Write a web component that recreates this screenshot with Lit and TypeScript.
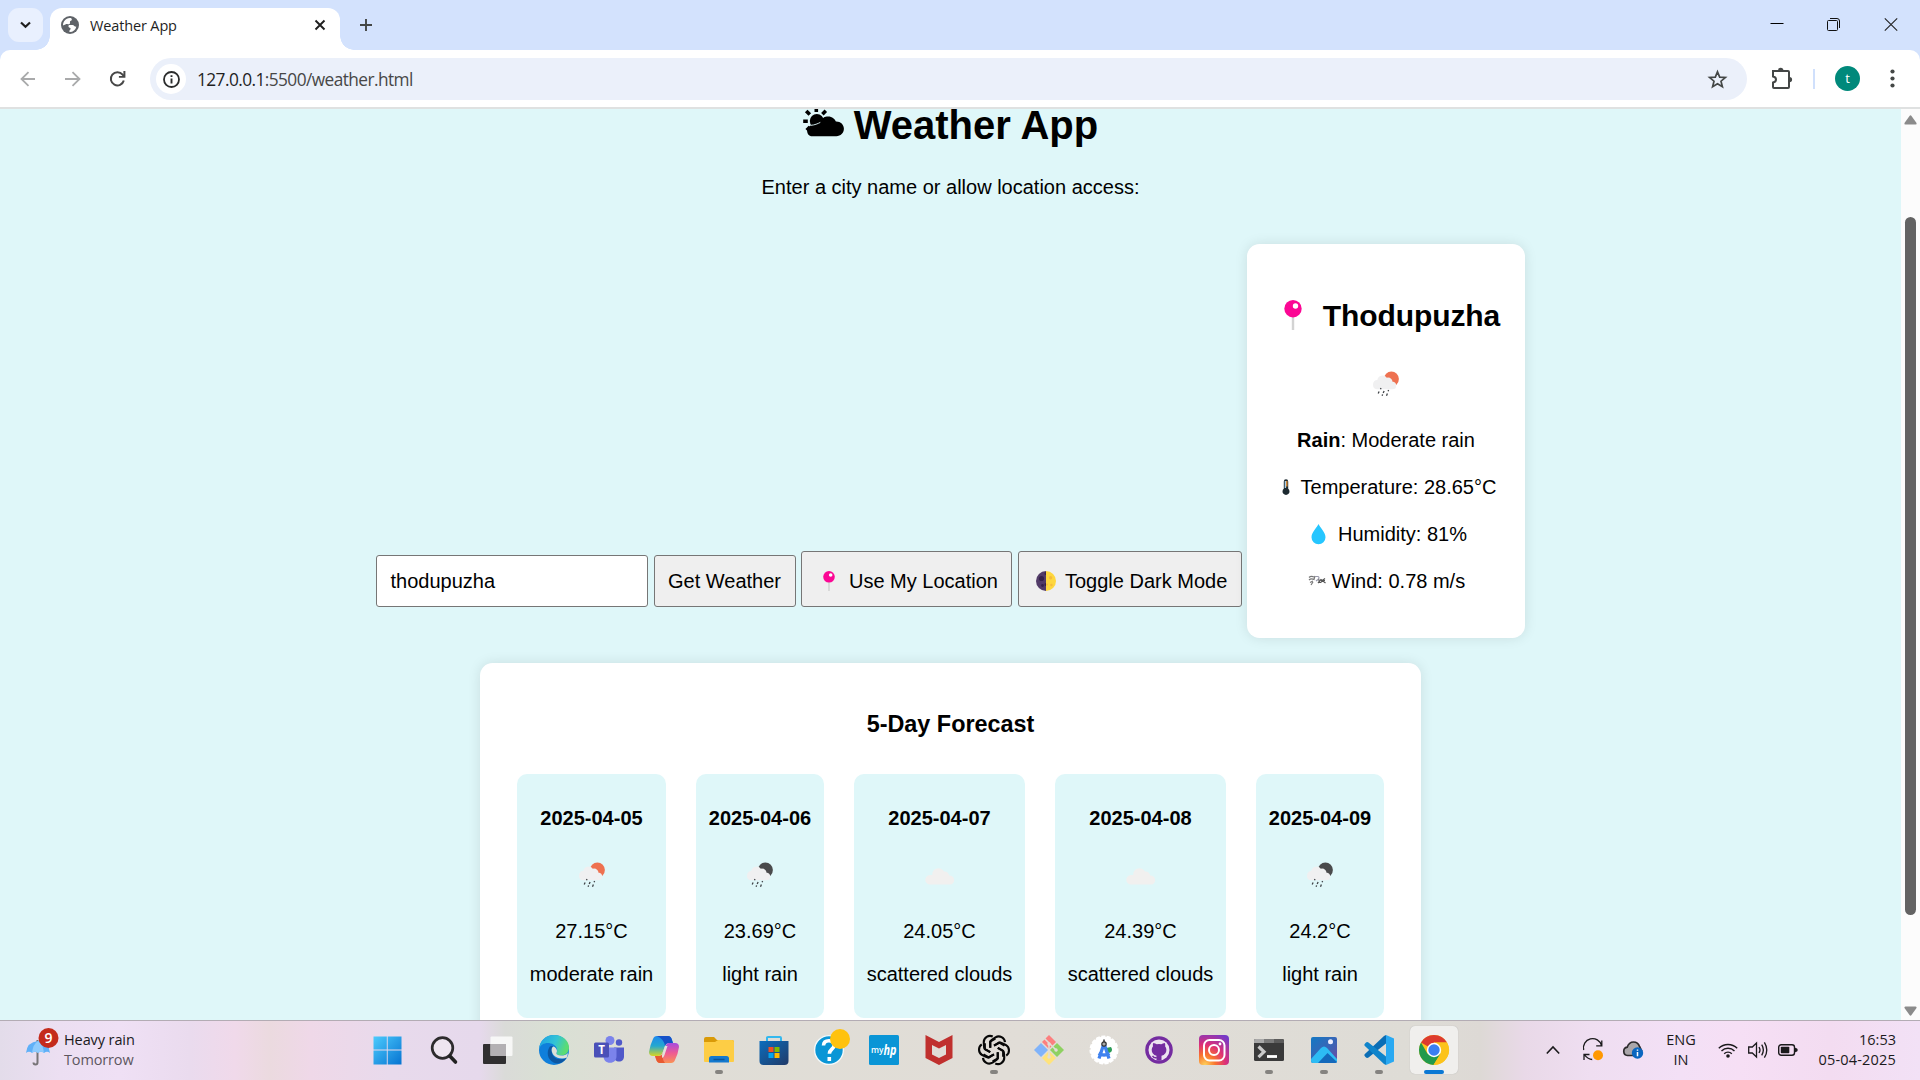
import { LitElement, html, css, svg } from "lit";
import { customElement } from "lit/decorators.js";

const rainIcon = (disc: string, size = 30) => html`<svg width=${size} height=${size} viewBox="0.8 -0.4 30 30">
  <circle cx="21.2" cy="9.6" r="7.5" fill=${disc}/>
  <path d="M6.5 19.8a4.6 4.6 0 0 1 .6-9.1A5.3 5.3 0 0 1 16.6 8.300a4.800 4.800 0 0 1 4.500 1.300q1.300 1.300 1 2.400a4.300 4.300 0 0 1 3.900 4.300 3.600 3.600 0 0 1-3.600 3.500z" fill="#f0f0f1"/>
  <path d="M10.800 18.700l-.5 1.200M8.900 22.200l-.9 2M13.900 21.600l-.9 2M18.400 20.700l-.5 1.200M12.400 25l-.5 1.400M17.200 24.200l-.9 2.200" stroke="#3f4347" stroke-width="1.300"/>
</svg>`;

const cloudIcon = html`<svg width="30" height="30" viewBox="0 0 30 30">
  <path d="M5.200 24.600a4.700 4.700 0 0 1-.4-9.500q1.900-.3 2.500-.2A6.200 6.200 0 0 1 18 10.200q1 1.300 1 1.300a4.500 4.500 0 0 1 5.200 4.100 4.500 4.500 0 0 1 .9 9z" fill="#f1f0ef"/>
</svg>`;

const pinIcon = (w: number, h: number) => html`<svg width=${w} height=${h} viewBox="0 0 18 30">
  <path d="M9 16v14" stroke="#d3d3d3" stroke-width="2.400"/>
  <circle cx="9" cy="8.700" r="8.700" fill="#fb0794"/><circle cx="11.500" cy="6" r="2.700" fill="#fff"/>
</svg>`;

const moonIcon = html`<svg width="20" height="20" viewBox="0 0 20 20">
  <path d="M10 0a10 10 0 0 0 0 20z" fill="#523b68"/><path d="M10 0a10 10 0 0 1 0 20z" fill="#fed73e"/>
  <circle cx="5.500" cy="7.500" r="2.600" fill="#35214a"/><circle cx="6.500" cy="14.500" r="1.400" fill="#35214a"/><path d="M10 1a1.500 1.500 0 0 0 0 3zM10 12a1.400 1.400 0 0 0 0 3z" fill="#35214a"/>
  <circle cx="14.600" cy="6.700" r="1.700" fill="#f6bb3c"/><circle cx="15.400" cy="14" r="1.200" fill="#f6bb3c"/><circle cx="11" cy="13.500" r="1" fill="#f6bb3c"/>
</svg>`;

const sunCloud = html`<svg width="42" height="32" viewBox="0 0 42 32">
  <circle cx="13.800" cy="13" r="7" fill="#000"/>
  <path d="M13.300 4V-1M6.800 6.600L3.200 3M4.800 13.200H.2M6.900 19l-3.200 3.200M19.400 6.200L22.800 2.800" stroke="#000" stroke-width="3.600"/>
  <path d="M8 28.200a5.700 5.700 0 0 1-.7-10.500C9.500 16.900 13 16 16.700 14.800 19 9.500 21.800 8.500 25 8.500c4.400 0 7 2.800 7.900 5 4.600-.2 8 3 8 7.300 0 4.200-3.400 7.400-7.500 7.400z" fill="#000"/>
  <path d="M8 17.300c3.500-.2 7-1.700 9.300-2.900" stroke="#dff7f9" fill="none" stroke-width=".9"/>
</svg>`;

const thermometer = html`<svg width="8" height="17" viewBox="0 0 8 17">
  <path d="M1.800 9.700V2.500a2.200 2.200 0 0 1 4.400 0v7.200a3.500 3.500 0 1 1-4.400 0z" fill="#1d2a30"/><path d="M2.700 2h1.400v7H2.700z" fill="#a9cfe9"/><path d="M4.100 2h1.400v5.500H4.100z" fill="#e8963c"/>
</svg>`;
const drop = html`<svg width="15" height="21" viewBox="0 0 15 21"><path d="M7.500 0c1.300 3.200 7 8.200 7 13.200a7 7 0 0 1-14 0C.5 8.200 6.200 3.200 7.500 0z" fill="#26c6ff"/></svg>`;
const windIcon = html`<svg width="18" height="12" viewBox="0 0 18 12" fill="none" stroke="#777" stroke-width="1.200">
  <path d="M1 2.500Q3 .5 6 2M1 5Q3 3 6 4.500L7 1M2 7.500L5 6M3 10l2-3"/><path d="M7 1.500h3q2 1 0 3L8 6" stroke="#99a"/>
  <path d="M10 8l3-3.500 4.500 3.500M10 5l7 .5M17 3.500l-4 3M10.500 7.500h3" stroke="#555"/>
</svg>`;

interface Day { date: string; icon: unknown; temp: string; text: string; width: number; }
const days: Day[] = [
  { date: "2025-04-05", icon: rainIcon("#ee7150"), temp: "27.15°C", text: "moderate rain", width: 149 },
  { date: "2025-04-06", icon: rainIcon("#4a4a4c"), temp: "23.69°C", text: "light rain", width: 128 },
  { date: "2025-04-07", icon: cloudIcon, temp: "24.05°C", text: "scattered clouds", width: 171 },
  { date: "2025-04-08", icon: cloudIcon, temp: "24.39°C", text: "scattered clouds", width: 171 },
  { date: "2025-04-09", icon: rainIcon("#4a4a4c"), temp: "24.2°C", text: "light rain", width: 128 },
];

/* Every taskbar glyph is drawn in a 30 x 30 box. */
const appIcons: { art: unknown; state?: string }[] = [
  { art: svg`<defs><linearGradient id="w" x2="1" y2="1"><stop stop-color="#4ccbfd"/><stop offset="1" stop-color="#0673d1"/></linearGradient></defs>
    <path d="M0 2h13.300v13H0zM14.200 2H28v13H14.200zM0 16h13.300v14H0zM14.200 16H28v14H14.200z" fill="url(#w)" transform="translate(-.5 -.5)"/>` },
  { art: svg`<g transform="translate(1 0)"><circle cx="12.500" cy="13" r="10.300" fill="#eee5f0" stroke="#2d2b2d" stroke-width="2.700"/><path d="M19.800 21L25.500 27" stroke="#222" stroke-width="3.600" stroke-linecap="round"/></g>` },
  { art: svg`<g transform="translate(-1 0)"><rect x="0" y="9" width="23" height="20" rx="1" fill="#302f30"/><rect x="7.500" y="1.500" width="22" height="19.500" rx="1" fill="#fafafa" fill-opacity=".9"/><path d="M7.500 9H23v12H7.500z" fill="#b3b0b3"/></g>` },
  { art: svg`<defs><linearGradient id="e1" x2="1" y2=".3"><stop stop-color="#1c9fe6"/><stop offset=".6" stop-color="#33c4d5"/><stop offset="1" stop-color="#5bdc72"/></linearGradient></defs>
    <circle cx="15" cy="15" r="15" fill="#0f7fdb"/><path d="M0 14C1 5 7 0 15 0c9 0 15 6 15 12.500 0 5-3.500 8-8 8-3 0-5-1.200-4.600-2.500 1.500-2 1.100-6-3-8.500C9 6.500 2 8 0 14z" fill="url(#e1)"/>
    <path d="M10.500 12c-3 5-2.500 12 4 15.500 5 2.500 11-.5 13-4.500-5 2.500-11 1.500-13.500-2.500C12 17 12.500 13 14.500 11.500c-1.600-.8-3-.7-4 .5z" fill="#0c57a2"/>
    <path d="M17.400 18c-.4 1.300 1.600 2.500 4.600 2.500 4.400 0 6.500-2 8-4v8l-2 1.500c-4 1-9 .5-12-2.500-3-4-2.500-9 0-10 2.400 1 2.900 3 1.400 5z" fill="#dbdfd6" fill-opacity=".0"/>
    <path d="M14.500 11.500c-2.500 1-2.500 5.500.5 9 3 3 8.500 4 13 2l1-4.500c-2 1.900-4 2.500-7 2.500-3 0-5-1.200-4.600-2.500 1.500-2 .1-5.500-2.900-6.500z" fill="#dde0d8"/>` },
  { art: svg`<circle cx="16" cy="5.500" r="4.500" fill="#7b83eb"/><circle cx="25" cy="7.500" r="3.200" fill="#5059c9"/><path d="M20 12.500h10v9c0 3-2 5-5 5s-5-2-5-5z" fill="#5059c9"/><path d="M9.500 12.500h13V21c0 4-2.500 6.800-6.500 6.800S9.500 25 9.500 21z" fill="#7b83eb"/>
    <rect y="7.500" width="15" height="15" rx="1.500" fill="#4a50b8"/><text x="7.500" y="19" text-anchor="middle" font-size="11.500" font-weight="700" fill="#fff">T</text>` },
  { art: svg`<defs><linearGradient id="c1" x2="0" y2="1"><stop stop-color="#1e88ee"/><stop offset=".5" stop-color="#25a8cf"/><stop offset="1" stop-color="#d9d622"/></linearGradient><linearGradient id="c2" x2="0" y2="1"><stop stop-color="#a64be0"/><stop offset=".5" stop-color="#ee5a94"/><stop offset="1" stop-color="#fa9255"/></linearGradient></defs>
    <path d="M8 1h11q3 0 4 4l1 3h-4q-3 0-4 3l-3 8q-1 2-4 2H4q-4 0-4-4Q1 10 4 4q1-3 4-3z" fill="url(#c1)"/><path d="M8 1h11q3 0 4 4l1 3h-4q-3 0-4 3Q15 4 8 1z" fill="#1651c8"/>
    <path d="M20 8h6q4 0 4 4-1 7-4 13-1 3-4 3H11q-3 0-4-4l-1-3h4q3 0 4-3l3-8q1-2 3-2z" fill="url(#c2)"/><path d="M6 21h4q3 0 4-3-1 7 2 10h-5q-3 0-4-4z" fill="#e85a31"/><path d="M16 11h2.500l-3 9q-.7 2-2 3-1.300-2 .5-6z" fill="#e6e1dc"/>` },
  { art: svg`<path d="M0 4q0-2 2-2h8l3 3h15q2 0 2 2v6H0z" fill="#d99a08"/><path d="M0 7h11l3-2h14q2 0 2 2v19q0 1-1 1H1q-1 0-1-1z" fill="#fdcd45"/><path d="M5 27.500v-4Q5 21 7.500 21h15q2.500 0 2.500 2.500v4z" fill="#1479ce"/><path d="M9.500 24.500h11" stroke="#0b549a" stroke-width="1.500"/>`, state: "open" },
  { art: svg`<defs><linearGradient id="s" x2="1" y2="1"><stop stop-color="#0b6dbd"/><stop offset="1" stop-color="#213a68"/></linearGradient></defs><path d="M8 7V2.500Q8 2 9 2h12q1 0 1 1V7" fill="none" stroke="#34b8ee" stroke-width="2"/><path d="M.5 6h29v20q0 4-4 4h-21q-4 0-4-4z" fill="url(#s)"/><path d="M9.500 12h5v5h-5z" fill="#f25022"/><path d="M15.500 12h5v5h-5z" fill="#7fba00"/><path d="M9.500 18h5v5h-5z" fill="#00a4ef"/><path d="M15.500 18h5v5h-5z" fill="#ffb900"/>` },
  { art: svg`<circle cx="15" cy="15" r="14.400" fill="#0a96d6" stroke="#f4f8f9" stroke-width="1.400"/><path d="M9.500 10.500c.2-3 2.300-4.700 5.300-4.700 3 0 5.300 1.500 5.300 4.400 0 4-4.700 4-4.700 8.500M15.300 22v4" fill="none" stroke="#fff" stroke-width="3.600"/><circle cx="26" cy="4" r="10" fill="#ffc20e"/>` },
  { art: svg`<rect width="30" height="30" rx="1.500" fill="#0a95d6"/><text x="2" y="18" font-size="9.500" fill="#fff" font-weight="600" textLength="12.500" lengthAdjust="spacingAndGlyphs">my</text><text x="14.500" y="19.500" font-size="14" font-style="italic" font-weight="700" fill="#fff" textLength="13" lengthAdjust="spacingAndGlyphs">hp</text>` },
  { art: svg`<path d="M1.500 0L15 7 28.500 0v23L15 30 1.500 23zM8 10v9.500l7 3.500 7-3.500V10l-7 3.500z" fill="#c0302e" fill-rule="evenodd"/>` },
  { art: svg`<g fill="none" stroke="#080808" stroke-width="2.100" stroke-linejoin="round">${[0, 60, 120, 180, 240, 300].map(a => svg`<path d="M11.300 12.800V7.200Q11.300 5.800 12.500 5L16.500 2.300A6.300 6.300 0 0 1 26 7.200M15 10.600l5.300-3.100 5.200 3" transform=${`rotate(${a} 15 15)`}/>`)}</g>`, state: "open" },
  { art: svg`<path d="M15 0l7 7-7 7-7-7z" fill="#fc7f7f"/><path d="M7 8l7 7-7 7-7-7z" fill="#80b3fa"/><path d="M23 8l7 7-7 7-7-7z" fill="#8ed161"/><path d="M15 16l7 7-7 7-7-7z" fill="#ffe37c"/><path d="M10.500 3.500L23 16M15 9v14" stroke="#e1ddd7" stroke-width="1.500" fill="none"/><circle cx="15" cy="9" r="1.700" fill="#e1ddd7"/><circle cx="22" cy="15" r="1.700" fill="#e1ddd7"/><circle cx="15" cy="22" r="1.700" fill="#e1ddd7"/>` },
  { art: svg`<circle cx="15" cy="15" r="13.500" fill="#fff" stroke="#fff" stroke-width="2" stroke-dasharray="4 1.500"/><path d="M17 13l5-1q2 3 0 5l-4 2z" fill="#2b9c57"/><path d="M14.500 10L10 23.500M15.500 10L20 23.500M9.500 18.500q5.500 3 11 0" fill="none" stroke="#3f82ef" stroke-width="3.300"/><circle cx="15" cy="9" r="2.200" fill="#aaa" stroke="#333" stroke-width="1.200"/><path d="M15 4.500v2.500" stroke="#333" stroke-width="1.500"/>` },
  { art: svg`<circle cx="15" cy="15" r="13.800" fill="#742ca0"/><circle cx="15" cy="15" r="10.500" fill="#ece3f0"/><path d="M12.500 25.300v-4.500q-4.800-1.300-4.800-6 0-2 1.300-3.500-.5-2 .3-3.400 2 .2 3.500 1.400 2.200-.6 4.500 0 1.500-1.200 3.500-1.400.8 1.700.3 3.400 1.300 1.500 1.300 3.500 0 4.700-4.900 6v4.500q-2.500.7-5 0z" fill="#742ca0"/><path d="M12.800 22.500q-2.800.8-4.300-1.700" fill="none" stroke="#742ca0" stroke-width="1.400"/>` },
  { art: svg`<defs><radialGradient id="ig" cx=".2" cy="1" r="1.150"><stop stop-color="#fed25a"/><stop offset=".3" stop-color="#f9742e"/><stop offset=".6" stop-color="#dc2f78"/><stop offset="1" stop-color="#7639c7"/></radialGradient></defs><rect width="30" height="30" rx="4" fill="url(#ig)"/><g fill="none" stroke="#fff" stroke-width="2"><rect x="5" y="5" width="20.500" height="20.500" rx="5.500"/><circle cx="15" cy="15" r="5"/></g><circle cx="21" cy="9" r="1.400" fill="#fff"/>` },
  { art: svg`<rect y="4" width="30" height="22" rx="1.500" fill="#3a3a3a"/><path d="M0 8V5.500Q0 4 1.500 4H10v4z" fill="#a9a9a9"/><path d="M10 4h10v4H10z" fill="#7b7b7b"/><path d="M20 4h8.500Q30 4 30 5.500V8H20z" fill="#5b5b5b"/><path d="M4.500 11.500l5.500 5.300-5.500 5.300" fill="none" stroke="#c9c9c9" stroke-width="3.200"/><path d="M13 21.500h10" stroke="#fff" stroke-width="2.800"/>`, state: "open" },
  { art: svg`<defs><linearGradient id="ph" x2="1" y2="1"><stop stop-color="#1379c4"/><stop offset=".6" stop-color="#3f62b4"/><stop offset="1" stop-color="#7446a0"/></linearGradient></defs><rect x="2" y="2" width="26" height="26" rx="2" fill="url(#ph)"/><path d="M2 24l10-11q3-3 6 0l10 11v2q0 2-2 2H4q-2 0-2-2z" fill="#2dbcf4"/><path d="M9 28l9.500-10L28 27q-1 1-2 1z" fill="#1469bb"/><circle cx="21.500" cy="6.700" r="2.500" fill="#eef"/>`, state: "open" },
  { art: svg`<path d="M22 0l8 3.500v23L22 30z" fill="#29a9f2"/><path d="M22 8.500L4.500 22.500q-1.500 1-3-.5L.7 21q-1-1 .2-2L20 1l2-1z" fill="#0a6db5"/><path d="M22 21.500L4.500 7.500q-1.500-1-3 .5L.7 9q-1 1 .2 2L20 29l2 1z" fill="#0f84cb"/>`, state: "open" },
  { art: svg`<circle cx="15" cy="15" r="15" fill="#fcc31b"/><path d="M15 15L2 7.500A15 15 0 0 1 28 7.500H15z" fill="#dd3b2e"/><path d="M2 7.500A15 15 0 0 0 14.500 30L21.500 18.700 15 15 8.500 18.700z" fill="#229a4c"/><path d="M15 7.500h13A15 15 0 0 1 14.500 30l7-11.300z" fill="#fcc31b"/><circle cx="15" cy="15" r="7.200" fill="#fff"/><circle cx="15" cy="15" r="5.700" fill="#3a7ff2"/>`, state: "active" },
];

@customElement("browser-chrome")
export class BrowserChrome extends LitElement {
  static styles = css`
    :host { display: block; height: 109px; background: #d3e2fd; font-family: "Open Sans", "Noto Sans", sans-serif; color: #1f1f1f; }
    * { box-sizing: border-box; }
    svg { display: block; flex: none; overflow: visible; }
    .strip { height: 50px; display: flex; align-items: flex-start; padding: 8px 23px 0 8px; }
    .search { width: 35px; height: 34px; border-radius: 11px; background: #e9f0fe; display: grid; place-items: center; margin-right: 7px; }
    .tab { position: relative; width: 290px; height: 42px; background: #fff; border-radius: 12px 12px 0 0; display: flex; align-items: center; padding: 0 15px 8px 11px; }
    .tab::before, .tab::after { content: ""; position: absolute; bottom: 0; width: 14px; height: 14px; }
    .tab::before { right: 100%; background: radial-gradient(circle at 0 0, transparent 13.500px, #fff 14px); }
    .tab::after { left: 100%; background: radial-gradient(circle at 100% 0, transparent 13.500px, #fff 14px); }
    .title { font-size: 14.500px; line-height: 20px; margin-left: 11px; padding-top: 1px; flex: 1; letter-spacing: -.14px; white-space: nowrap; }
    .plus { margin: 11px auto 0 20px; }
    .win { display: flex; gap: 44px; margin-top: 10px; }
    .bar { height: 57px; background: #fff; border-radius: 10px 10px 0 0; display: flex; align-items: center; padding: 0 24px 0 20px; }
    .nav { display: flex; gap: 29px; margin-right: 24px; }
    .url { width: 1597px; height: 42px; border-radius: 21px; background: #ebf0fa; display: flex; align-items: center; padding: 0 20px 0 6px; margin-top: 1px; }
    .info { width: 30px; height: 30px; border-radius: 50%; background: #fff; display: grid; place-items: center; margin-right: 11px; }
    .addr { flex: 1; font-size: 17.300px; line-height: 24px; letter-spacing: -.57px; padding-top: 1px; white-space: nowrap; }
    .addr span { color: #474747; }
    .puzzle { margin-left: 24px; }
    .sep { width: 2px; height: 20px; background: #d0e0fc; margin: 0 20px 0 21px; }
    .avatar { width: 25px; height: 25px; border-radius: 50%; background: #00897b; color: #fff; font-size: 13px; line-height: 24px; text-align: center; margin-right: 30px; }
    .line { height: 2px; background: #dfe1e1; }
  `;
  render() {
    return html`
      <div class="strip">
        <div class="search"><svg width="11" height="8" viewBox="0 0 11 8"><path d="M1 1.500l4.500 4.300L10 1.500" fill="none" stroke="#1f1f1f" stroke-width="2.200"/></svg></div>
        <div class="tab">
          <svg width="18" height="18" viewBox="0 0 18 18"><circle cx="9" cy="9" r="9" fill="#5f6368"/><path d="M2 9.500c0-4 2.500-7 6.800-7.500 1.500 0 2.200.7 2 1.700-.3 1.200-1.500 1-1.800 1.800-.3 1 .5 1.300-.2 2.200-.8.9-2.500.4-3.800.4-.6.700-1.500.500-3 1.400zM8 9h3.500c1.800 0 1.600 1.800 3.800 1.800-.7 3.300-3.300 5.200-6.500 5.300-1-.6-.4-1.800.4-2.400.8-.8.4-1.700-.5-1.900C7.300 11.300 7 10 8 9z" fill="#fff"/></svg>
          <span class="title">Weather App</span>
          <svg width="10" height="10" viewBox="0 0 10 10"><path d="M.5.5l9 9m0-9l-9 9" stroke="#1f1f1f" stroke-width="1.900"/></svg>
        </div>
        <svg class="plus" width="12" height="12" viewBox="0 0 12 12"><path d="M6 0v12M0 6h12" stroke="#444746" stroke-width="1.900"/></svg>
        <div class="win">
          <svg width="13" height="13" viewBox="-.5 0 13 13"><path d="M0 5.500h13" stroke="#000"/></svg>
          <svg width="13" height="13" viewBox="0 0 13 13" fill="none" stroke="#111"><rect x=".5" y="2.500" width="10" height="10" rx="1"/><path d="M3 .5h7q2.500 0 2.500 2.500v7"/></svg>
          <svg width="13" height="13" viewBox="-.5 0 13 13"><path d="M.3.3l12.400 12.400m0-12.400L.3 12.700" stroke="#222" stroke-width="1.100"/></svg>
        </div>
      </div>
      <div class="bar">
        <div class="nav">
          <svg width="16" height="16" viewBox="0 0 16 16"><path d="M15 8H2M8.500 1.200L1.500 8l7 6.800" fill="none" stroke="#a9aaab" stroke-width="1.800"/></svg>
          <svg width="16" height="16" viewBox="0 0 16 16"><path d="M0 8h14M7.500 1.200l7 6.800-7 6.800" fill="none" stroke="#a9aaab" stroke-width="1.800"/></svg>
          <svg width="16" height="16" viewBox="0 0 16 16"><path d="M13.800 9.500A6.600 6.600 0 1 1 12.600 3.700L14 5.400" fill="none" stroke="#474747" stroke-width="2"/><path d="M15.400 0v6.700H8.900V4.900h4.500V0z" fill="#474747"/></svg>
        </div>
        <div class="url">
          <div class="info"><svg width="17" height="17" viewBox="0 0 17 17"><circle cx="8.500" cy="8.500" r="7.500" fill="none" stroke="#2b2c2c" stroke-width="1.800"/><path d="M8.500 7.500v5M8.500 4.300v1.800" stroke="#2b2c2c" stroke-width="1.900"/></svg></div>
          <div class="addr">127.0.0.1<span>:5500/weather.html</span></div>
          <svg width="19" height="19" viewBox="0 0 19 19"><path d="M9.500 1.800l2.200 5.300 5.700.4-4.400 3.700 1.400 5.600-4.900-3-4.900 3L6 11.200 1.600 7.500l5.700-.4z" fill="none" stroke="#444746" stroke-width="1.700"/></svg>
        </div>
        <svg class="puzzle" width="21" height="21" viewBox="0 0 21 21"><path d="M2 3h15q1 0 1 1v15q0 1-1 1H3q-1 0-1-1v-4.500q3-.5 3-3t-3-3V3z" fill="none" stroke="#444746" stroke-width="2"/><path d="M7 2.500a2.700 2.700 0 0 1 5.400 0zM18.500 9a2.600 2.600 0 0 1 0 5.200z" fill="#444746"/></svg>
        <div class="sep"></div>
        <div class="avatar">t</div>
        <svg width="5" height="19" viewBox="0 0 5 19" fill="#444746"><circle cx="2.500" cy="2.500" r="2.100"/><circle cx="2.500" cy="9.500" r="2.100"/><circle cx="2.500" cy="16.500" r="2.100"/></svg>
      </div>
      <div class="line"></div>`;
  }
}

@customElement("weather-page")
export class WeatherPage extends LitElement {
  static styles = css`
    :host { display: flex; height: 911px; overflow: hidden; background: #dff7f9; font-family: "Liberation Sans", Arial, sans-serif; font-size: 20px; line-height: 24px; color: #000; }
    * { box-sizing: border-box; }
    svg { display: block; flex: none; overflow: visible; }
    h1, h2, h3, p { margin: 0; white-space: nowrap; }
    .page { width: 1901px; display: flex; flex-direction: column; align-items: center; flex: none; }
    h1 { font-size: 40px; line-height: 46px; margin-top: -7px; display: flex; align-items: flex-start; gap: 9px; }
    h1 svg { margin-top: 6px; }
    .lead { margin: 27px 0 45px; }
    .row { display: flex; align-items: flex-end; height: 394px; }
    .field, .btn { border: 1px solid #767676; border-radius: 3px; height: 52px; margin-bottom: 31px; display: flex; align-items: flex-end; padding: 0 0 13px 14px; white-space: nowrap; }
    .field { width: 272px; background: #fff; margin-right: 6px; padding-left: 13.500px; }
    .btn { background: #efefef; width: 142px; margin-right: 5px; padding-left: 13px; }
    .btn svg { margin-bottom: 2px; }
    .loc { width: 211px; height: 56px; margin-right: 6px; padding-left: 21px; gap: 14px; }
    .dark { width: 224px; height: 56px; padding-left: 17px; gap: 9px; }
    .card { width: 278px; height: 394px; background: #fff; border-radius: 12.500px; box-shadow: 0 0 12.500px rgba(0, 0, 0, .1); padding-top: 55px; display: flex; flex-direction: column; align-items: center; }
    .city { font-size: 30px; line-height: 34px; display: flex; align-items: flex-start; gap: 21px; margin-left: 12px; letter-spacing: -.1px; }
    .city svg { margin-top: 1px; }
    .sky { margin: 36px 0 29px; }
    .line { display: flex; align-items: center; margin-bottom: 23px; }
    .t { gap: 11px; margin-left: 6px; } .h { gap: 12px; margin-left: 6px; } .w { gap: 6px; margin-left: 1px; }
    .forecast { width: 941px; background: #fff; border-radius: 12.500px; box-shadow: 0 0 12.500px rgba(0, 0, 0, .1); margin-top: 25px; padding: 47px 37px 37px; flex: none; height: 400px; }
    h3 { font-size: 23.400px; line-height: 28px; text-align: center; }
    .days { display: flex; gap: 30px; margin-top: 36px; }
    .day { height: 244px; background: #dff7f9; border-radius: 10px; padding-top: 32px; display: flex; flex-direction: column; align-items: center; }
    .day svg { margin: 30px 0 29px; }
    .day p { margin-bottom: 19px; }
    .scroll { width: 19px; background: #fcfcfc; display: flex; flex-direction: column; align-items: center; padding: 6px 0 3px; }
    .thumb { width: 11px; height: 698px; border-radius: 6px; background: #636363; margin: 92px 0 91px; }
  `;
  render() {
    return html`
      <div class="page">
        <h1>${sunCloud}<span>Weather App</span></h1>
        <p class="lead">Enter a city name or allow location access:</p>
        <div class="row">
          <div class="field">thodupuzha</div>
          <div class="btn">Get Weather</div>
          <div class="btn loc">${pinIcon(12, 20)}<span>Use My Location</span></div>
          <div class="btn dark">${moonIcon}<span>Toggle Dark Mode</span></div>
          <div class="card">
            <h2 class="city">${pinIcon(18, 30)}<span>Thodupuzha</span></h2>
            <div class="sky">${rainIcon("#ee7150")}</div>
            <p class="line"><b>Rain</b>: Moderate rain</p>
            <p class="line t">${thermometer}<span>Temperature: 28.65°C</span></p>
            <p class="line h">${drop}<span>Humidity: 81%</span></p>
            <p class="line w">${windIcon}<span>Wind: 0.78 m/s</span></p>
          </div>
        </div>
        <div class="forecast">
          <h3>5-Day Forecast</h3>
          <div class="days">
            ${days.map(d => html`<div class="day" style="width:${d.width}px"><b>${d.date}</b>${d.icon}<p>${d.temp}</p><p>${d.text}</p></div>`)}
          </div>
        </div>
      </div>
      <div class="scroll">
        <svg width="13" height="10" viewBox="0 0 13 10"><path d="M5.500 1q1-1.300 2 0l5 7q.6 1.500-1 1.500h-10q-1.600 0-1-1.500z" fill="#8b8b8b"/></svg>
        <div class="thumb"></div>
        <svg width="13" height="10" viewBox="0 0 13 10"><path d="M5.500 9q1 1.300 2 0l5-7q.6-1.500-1-1.500h-10q-1.600 0-1 1.500z" fill="#8b8b8b"/></svg>
      </div>`;
  }
}

@customElement("task-bar")
export class TaskBar extends LitElement {
  static styles = css`
    :host { display: flex; height: 60px; border-top: 1px solid #b3acb4; box-sizing: border-box; font-family: "Open Sans", "Noto Sans", sans-serif; font-size: 14.500px; line-height: 20px; color: #1b1a1c;
      background: linear-gradient(90deg, #e3dcea 0, #ecdff2 60px, #efe0f5 120px, #eadbee 190px, #f0d9ea 235px, #ebdadf 270px, #efd8e8 310px, #e8daec 390px, #e6d9ec 480px, #dadbd8 505px, #d9e0d4 550px, #dfddd6 640px, #e1ddd7 1000px, #dedcd6 1420px, #ddd9d5 1480px, #e9d9e8 1525px, #efdef1 1590px, #f3e0f6 1680px, #f6dff5 1740px, #f3dcf1 1830px, #f2e1f6 1920px); }
    * { box-sizing: border-box; }
    svg { display: block; flex: none; overflow: visible; }
    .weather { width: 361px; padding: 5px 0 0 26px; display: flex; flex: none; }
    .weather svg { margin-right: 6px; }
    .lines { padding-top: 4px; white-space: nowrap; letter-spacing: -.1px; }
    .muted { color: #5d575f; letter-spacing: -.15px; }
    .apps { display: flex; flex: none; padding-top: 5px; }
    .app { width: 55px; height: 48px; display: flex; flex-direction: column; align-items: center; padding-top: 9px; }
    .mark { width: 8px; height: 4px; border-radius: 2px; background: #858380; margin-top: 5px; }
    .active { width: 48px; margin-left: 3.500px; border-radius: 5px; background: #f0efed; box-shadow: 0 0 1px #aaa; }
    .active .mark { width: 20px; background: #0b78d4; }
    .tray { flex: 1; display: flex; align-items: center; padding: 0 24px 1px 0; justify-content: flex-end; }
    .lang { width: 30px; text-align: center; margin: 0 22px 0 23px; }
    .clock { text-align: right; white-space: nowrap; width: 98px; padding-bottom: 1px; }
    .date { letter-spacing: .18px; }
    .icons { display: flex; align-items: center; gap: 10px; }
    .up { margin-right: 13px; }
    .sync { margin-right: 10px; }
  `;
  render() {
    return html`
      <div class="weather">
        <svg width="32" height="42" viewBox="0 0 32 42"><path d="M11.500 14v22.500q0 2-2 2t-2-2" fill="none" stroke="#777477" stroke-width="2"/><path d="M0 27Q1 16 12 15q11 1 12 12-3-2.500-6 0-3-2.500-6 0-3-2.500-6 0-3-2.500-6 0z" fill="#5fb0f8"/><path d="M6 27q1-9 6-12 5 3 6 12-3-2.500-6 0-3-2.500-6 0z" fill="#8ecbfd"/><circle cx="22.500" cy="12" r="10" fill="#c42b1c"/><text x="22.500" y="17" text-anchor="middle" font-size="14" font-weight="600" fill="#fff">9</text></svg>
        <div class="lines"><div>Heavy rain</div><div class="muted">Tomorrow</div></div>
      </div>
      <div class="apps">
        ${appIcons.map(a => html`<div class="app ${a.state ?? ""}"><svg width="30" height="30" viewBox="0 0 30 30">${a.art}</svg>${a.state ? html`<i class="mark"></i>` : ""}</div>`)}
      </div>
      <div class="tray">
        <div class="icons">
          <svg class="up" width="14" height="10" viewBox="0 0 14 10"><path d="M.8 8.500L7 2l6.200 6.500" fill="none" stroke="#1b1a1c" stroke-width="1.600"/></svg>
          <svg class="sync" width="20" height="20" viewBox="0 0 20 20"><path d="M.7 10A9 9 0 0 1 18.500 5.500M18.800 .5v5.300h-5.600M1 20v-5.500h5.500M1.200 14.700q4 4.800 8 4.800" fill="none" stroke="#1b1a1c" stroke-width="1.300"/><circle cx="15" cy="15.200" r="5" fill="#ff9800"/></svg>
          <svg width="20" height="18" viewBox="0 0 20 18"><path d="M4.500 14.500a4.200 4.200 0 0 1-.3-8.300Q6 1 10.500 1 15 1 16.500 5.500l2 4-7 5z" fill="#aaa6aa" stroke="#2c2a2c" stroke-width="1.700"/><circle cx="14.500" cy="12" r="5.700" fill="#0a66c0"/><path d="M14.500 11v4.200M14.500 8.500v1.300" stroke="#fff" stroke-width="1.500"/></svg>
        </div>
        <div class="lang">ENG<br>IN</div>
        <div class="icons">
          <svg width="20" height="15" viewBox="0 0 20 15"><path d="M.8 5.300a13 13 0 0 1 18.400 0M3.500 8a9.200 9.200 0 0 1 13 0M6.200 10.700a5.400 5.400 0 0 1 7.600 0" fill="none" stroke="#1b1a1c" stroke-width="1.400"/><circle cx="10" cy="13" r="1.800" fill="#1b1a1c"/></svg>
          <svg width="20" height="18" viewBox="0 0 20 18" fill="none" stroke="#1b1a1c" stroke-width="1.300"><path d="M.7 6h3.600L8.500 2v14l-4.200-4H.7z"/><path d="M11 6q2 3 0 6M13.700 3.700q3.300 5.300 0 10.600M16.400 1.300q4.800 7.700 0 15.400"/></svg>
          <svg width="20" height="12" viewBox="0 0 20 12"><rect x=".7" y=".7" width="15.800" height="10.600" rx="2.500" fill="none" stroke="#1b1a1c" stroke-width="1.400"/><rect x="2.800" y="2.800" width="8.500" height="6.500" rx=".8" fill="#1b1a1c"/><path d="M17 3.800q2.800.2 2.800 2.200T17 8.200z" fill="#1b1a1c"/></svg>
        </div>
        <div class="clock">16:53<br><span class="date">05-04-2025</span></div>
      </div>`;
  }
}

@customElement("app-root")
export class AppRoot extends LitElement {
  static styles = css`
    :host { display: block; width: 1920px; height: 1080px; overflow: hidden; }
  `;
  render() {
    return html`<browser-chrome></browser-chrome><weather-page></weather-page><task-bar></task-bar>`;
  }
}
